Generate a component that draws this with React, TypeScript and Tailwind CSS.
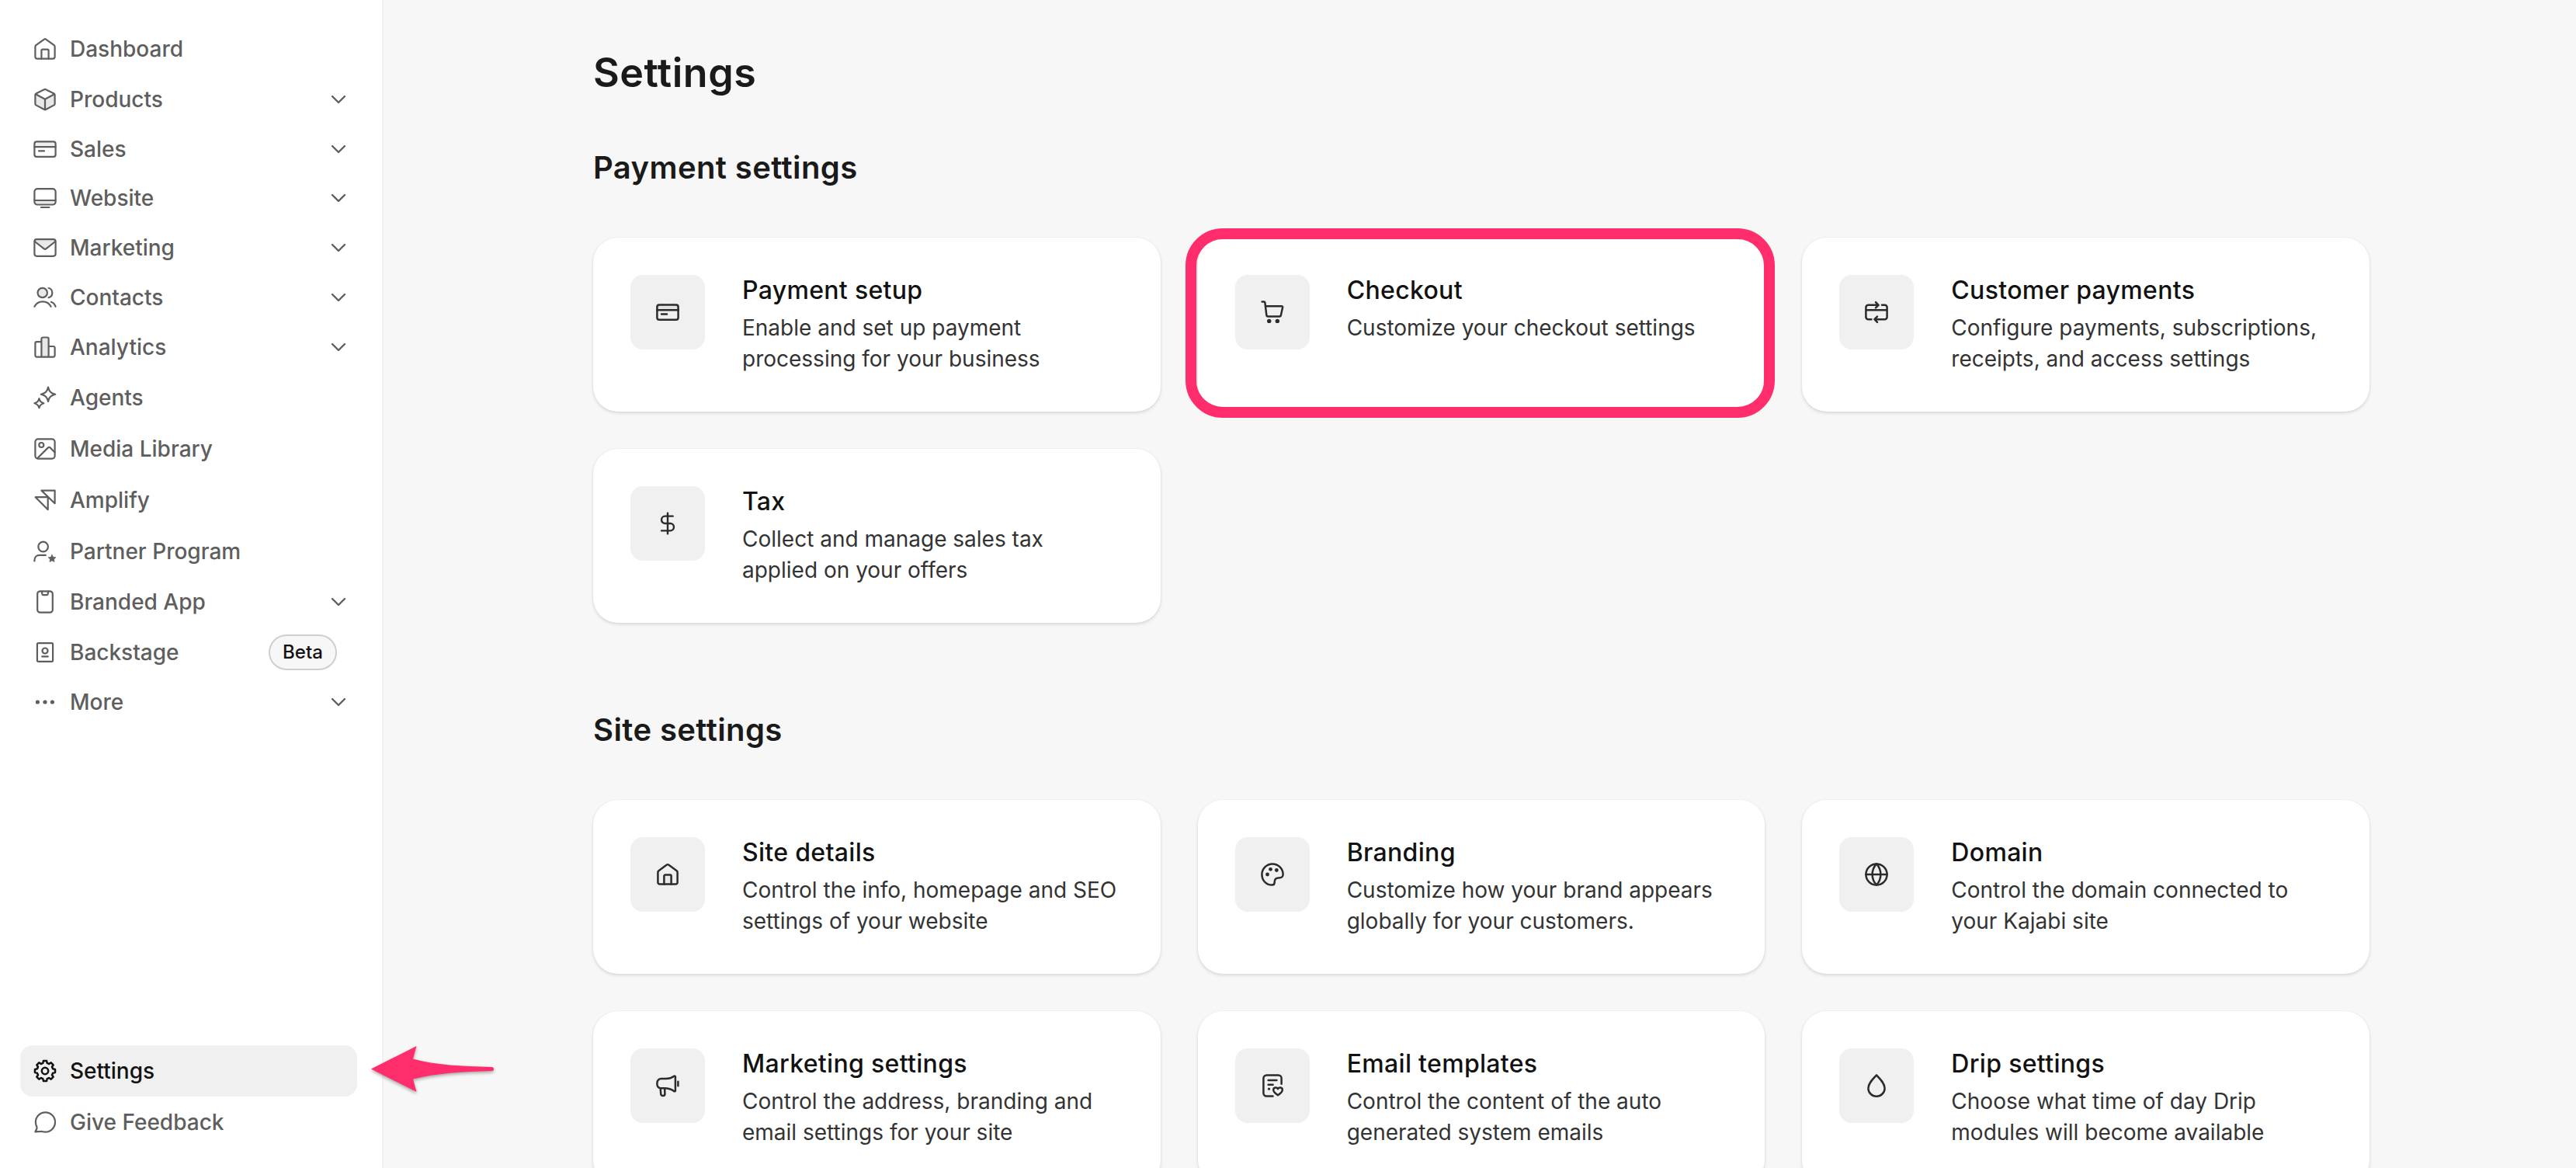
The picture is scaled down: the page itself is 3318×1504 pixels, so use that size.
import React from "react";
import { ChevronDown, DollarSign } from "lucide-react";
import { clsx } from "clsx";

type IconName =
  | "home"
  | "box"
  | "card"
  | "monitor"
  | "mail"
  | "contacts"
  | "bars"
  | "sparkles"
  | "image"
  | "amplify"
  | "partner"
  | "phone"
  | "backstage"
  | "more"
  | "gear"
  | "chat"
  | "cart"
  | "recurring"
  | "dollar"
  | "palette"
  | "globe"
  | "megaphone"
  | "template"
  | "drop";

interface NavItem {
  label: string;
  icon: IconName;
  expandable?: boolean;
  badge?: string;
  active?: boolean;
}

interface SettingsCard {
  title: string;
  icon: IconName;
  lines: string[];
  highlighted?: boolean;
}

// Eight rounded teeth around a 32x32 box
const gearPath = (() => {
  const points: string[] = [];
  for (let i = 0; i < 8; i++) {
    const base = (i * Math.PI) / 4 - Math.PI / 2;
    const steps: [number, number][] = [
      [-0.26, 10.4],
      [-0.16, 13.2],
      [0.16, 13.2],
      [0.26, 10.4],
    ];
    steps.forEach(([offset, radius]) => {
      const x = 16 + Math.cos(base + offset) * radius;
      const y = 16 + Math.sin(base + offset) * radius;
      points.push(`${x.toFixed(2)} ${y.toFixed(2)}`);
    });
  }
  return `M${points.join("L")}Z`;
})();

const tint = { fill: "#e8e8e8", stroke: "none" };
const solid = { fill: "currentColor", stroke: "none" };

const glyphs: Record<IconName, React.ReactNode> = {
  home: (
    <>
      <path d="M11.4 28.6V18a1.4 1.4 0 0 1 1.4-1.4h6.4a1.4 1.4 0 0 1 1.4 1.4v10.6" fill="#8881" />
      <path d="M3.4 13.2c0-.8.4-1.5 1-2L14.9 3.6a1.9 1.9 0 0 1 2.2 0l10.5 7.6c.6.5 1 1.2 1 2v13a2.4 2.4 0 0 1-2.4 2.4H5.8a2.4 2.4 0 0 1-2.4-2.4z" />
    </>
  ),
  box: (
    <>
      <path d="M3.4 9.2 16 15.8l12.6-6.6v13.6L16 29.4 3.4 22.8z" {...tint} />
      <path d="M15 3.2a2 2 0 0 1 2 0l10.6 5.4a1.9 1.9 0 0 1 1 1.7v11.4a1.9 1.9 0 0 1-1 1.7L17 29a2 2 0 0 1-2 0L4.4 23.4a1.9 1.9 0 0 1-1-1.7V10.3a1.9 1.9 0 0 1 1-1.7z" />
      <path d="M4 9.3 16 15.8l12-6.5M16 15.8v13" />
    </>
  ),
  card: (
    <>
      <path d="M3 7h26v6H3z" fill="#8882" stroke="none" />
      <rect x="2.4" y="6.4" width="27.2" height="19.4" rx="2.8" />
      <path d="M2.4 13.2h27.2M8 18.4h7" />
    </>
  ),
  monitor: (
    <>
      <path d="M3 19h26v4H3z" {...tint} />
      <rect x="2.4" y="4.2" width="27.2" height="20.3" rx="3.8" />
      <path d="M2.4 19h27.2M11 28h10.4" />
    </>
  ),
  mail: (
    <>
      <path d="M3 7.5 16 18 29 7.5 27 5.5H5z" {...tint} />
      <rect x="2.4" y="5.2" width="27.2" height="21.6" rx="3" />
      <path d="m2.8 8 11.6 9.2a2.6 2.6 0 0 0 3.2 0L29.2 8" />
    </>
  ),
  contacts: (
    <>
      <circle cx="12.7" cy="10" r="6.2" fill="#e8e8e8" />
      <path d="M20.6 4c2.8.4 4.7 3 4.7 6s-1.9 5.6-4.7 6.2" />
      <path d="M2.4 27.8c2-4 6-6.5 10.6-6.5s8.6 2.5 10.6 6.5M23.8 21.8c2.6.8 4.6 2.9 5.8 6" />
    </>
  ),
  bars: (
    <>
      <path d="M11.4 4.5h9.2v24h-9.2z" {...tint} />
      <path d="M11.4 28.6V5.2a1.7 1.7 0 0 1 1.7-1.7h5.8a1.7 1.7 0 0 1 1.7 1.7v23.4M11.4 9.2H5.2a1.8 1.8 0 0 0-1.8 1.8v15.8a1.8 1.8 0 0 0 1.8 1.8h21.6a1.8 1.8 0 0 0 1.8-1.8v-10a1.8 1.8 0 0 0-1.8-1.8h-6.2" />
    </>
  ),
  sparkles: (
    <>
      <path d="M20 2.6c1.3 5.6 3.5 7.8 9.2 9.2-5.7 1.4-7.9 3.6-9.2 9.2-1.3-5.6-3.5-7.8-9.2-9.2 5.7-1.4 7.9-3.6 9.2-9.2z" />
      <path d="M8.4 17.2c.9 3.6 2.4 5.1 6 6-3.6.9-5.1 2.4-6 6-.9-3.6-2.4-5.1-6-6 3.6-.9 5.1-2.4 6-6z" />
    </>
  ),
  image: (
    <>
      <rect x="3.4" y="3.4" width="25.2" height="25.2" rx="3.6" />
      <circle cx="11.3" cy="11" r="3" />
      <path d="M6 28.2 20 14.4a2 2 0 0 1 2.7 0l5.9 6" />
    </>
  ),
  amplify: <path d="M11.4 3.6h17.2v16.6L11.4 3.6zM3.7 12.2h16v16L3.7 12.2z" />,
  partner: (
    <>
      <circle cx="13.6" cy="10" r="6.3" />
      <path d="M2.4 28.4v-1c0-3.6 2.4-6.5 6.8-6.5h7.6" />
      <path
        d="m25 20.4 1.5 3 3.3.4-2.4 2.3.6 3.3-3-1.6-3 1.6.6-3.3-2.4-2.3 3.3-.4z"
        fill="currentColor"
        strokeWidth="0.8"
      />
    </>
  ),
  phone: (
    <>
      <rect x="6.2" y="2.4" width="19.6" height="27.2" rx="3.4" />
      <path d="M11.8 2.6 12.4 6a1.5 1.5 0 0 0 1.4 1.2h4.4A1.5 1.5 0 0 0 19.6 6l.6-3.4" />
    </>
  ),
  backstage: (
    <>
      <rect x="5.9" y="4.2" width="20.2" height="23.6" rx="1.6" />
      <circle cx="16" cy="14" r="3.5" />
      <path d="M12.2 21.4h7.6" />
    </>
  ),
  more: (
    <g {...solid}>
      <circle cx="6.4" cy="16" r="2.6" />
      <circle cx="16" cy="16" r="2.6" />
      <circle cx="25.4" cy="16" r="2.6" />
    </g>
  ),
  gear: (
    <>
      <path d={gearPath} />
      <circle cx="16" cy="16" r="4.2" />
    </>
  ),
  chat: (
    <path d="M16.4 3.4a12.5 12.5 0 0 0-12.5 12.5c0 2.5.7 4.6 1.5 6.4.3.8.2 1.4-.1 2.2l-1.9 3.9 7.2-.5c1-.1 1.6.1 2.5.3 1 .2 2.1.4 3.3.4a12.6 12.6 0 0 0 0-25.2z" />
  ),
  cart: (
    <>
      <path d="M2.6 2.6h2.3a1.5 1.5 0 0 1 1.5 1.3l1.9 15.7a2 2 0 0 0 2 1.8h14.6a2 2 0 0 0 2-1.7L29.1 9.8a1.4 1.4 0 0 0-1.4-1.6H7" />
      <circle cx="11.7" cy="27.4" r="2.7" {...solid} />
      <circle cx="22.3" cy="27.4" r="2.7" {...solid} />
    </>
  ),
  recurring: (
    <path d="M18.5 6.8H5.4a3 3 0 0 0-3 3v12.4a3 3 0 0 0 3 3h4M15 3.2l3.6 3.6-3.6 3.6M23 6.8h3.6a3 3 0 0 1 3 3v12.4a3 3 0 0 1-3 3H13.5M17 21.6l-3.6 3.6 3.6 3.6M2.4 13.3h27.2" />
  ),
  dollar: null,
  palette: (
    <>
      <path d="M16 2.4C8.5 2.4 2.4 8.4 2.4 16c0 7.2 5 13.6 13 13.6 2.6 0 3.3-1.4 3.3-3.6 0-3.5 1.5-5.6 4.8-5.6 4.5 0 6.1-1 6.1-4.4C29.6 8.4 23.5 2.4 16 2.4z" />
      <circle cx="9.5" cy="16" r="2.4" {...solid} />
      <circle cx="13.5" cy="9.3" r="2.4" {...solid} />
      <circle cx="21.3" cy="10.5" r="2.4" {...solid} />
    </>
  ),
  globe: (
    <>
      <circle cx="16" cy="16" r="13.6" />
      <path d="M2.4 16h27.2M16 2.4c-7.2 8-7.2 19.2 0 27.2M16 2.4c7.2 8 7.2 19.2 0 27.2" />
    </>
  ),
  megaphone: (
    <path d="M24.2 3.8c-3 2.2-6.5 3.3-10.2 3.3H7.8a5.3 5.3 0 0 0-5.4 5.6v1.4a5.2 5.2 0 0 0 4.3 5.2l.5 7.2a2.6 2.6 0 0 0 5.2 0l-.3-7.2c4.4 0 8.6 1.3 12.3 3.9.7.4 1.5 0 1.5-.8V4.5c0-.8-1-1.2-1.7-.7zM6.7 19.3h5.4M29.4 10.8v5.4" />
  ),
  template: (
    <>
      <path d="M16.5 29.5H8.4a4 4 0 0 1-4-4v-19a4 4 0 0 1 4-4h15.2a4 4 0 0 1 4 4v7.2M10.6 9h10.8M10.6 14.7h6" />
      <circle cx="11.5" cy="20.2" r="1.6" {...solid} />
      <path d="M23 28.2c-3.6-2.4-5.8-4.5-5.8-6.8 0-3.3 4.3-4 5.8-1.2 1.5-2.8 5.8-2.1 5.8 1.2 0 2.3-2.2 4.4-5.8 6.8z" />
    </>
  ),
  drop: (
    <path d="M16 2.4c5 5.2 10.6 10.6 10.6 17A10.5 10.5 0 0 1 16 29.7 10.5 10.5 0 0 1 5.4 19.4c0-6.4 5.6-11.8 10.6-17z" />
  ),
};

function Icon({ name, strokeWidth = 2 }: { name: IconName; strokeWidth?: number }) {
  if (name === "dollar") {
    return <DollarSign className="size-8 shrink-0" strokeWidth={1.8} />;
  }
  return (
    <svg
      viewBox="0 0 32 32"
      className="size-8 shrink-0"
      fill="none"
      stroke="currentColor"
      strokeWidth={strokeWidth}
      strokeLinecap="round"
      strokeLinejoin="round"
    >
      {glyphs[name]}
    </svg>
  );
}

const mainNav: NavItem[] = [
  { label: "Dashboard", icon: "home" },
  { label: "Products", icon: "box", expandable: true },
  { label: "Sales", icon: "card", expandable: true },
  { label: "Website", icon: "monitor", expandable: true },
  { label: "Marketing", icon: "mail", expandable: true },
  { label: "Contacts", icon: "contacts", expandable: true },
  { label: "Analytics", icon: "bars", expandable: true },
  { label: "Agents", icon: "sparkles" },
  { label: "Media Library", icon: "image" },
  { label: "Amplify", icon: "amplify" },
  { label: "Partner Program", icon: "partner" },
  { label: "Branded App", icon: "phone", expandable: true },
  { label: "Backstage", icon: "backstage", badge: "Beta" },
  { label: "More", icon: "more", expandable: true },
];

const footerNav: NavItem[] = [
  { label: "Settings", icon: "gear", active: true },
  { label: "Give Feedback", icon: "chat" },
];

const paymentCards: SettingsCard[] = [
  { title: "Payment setup", icon: "card", lines: ["Enable and set up payment", "processing for your business"] },
  { title: "Checkout", icon: "cart", lines: ["Customize your checkout settings"], highlighted: true },
  { title: "Customer payments", icon: "recurring", lines: ["Configure payments, subscriptions,", "receipts, and access settings"] },
  { title: "Tax", icon: "dollar", lines: ["Collect and manage sales tax", "applied on your offers"] },
];

const siteCards: SettingsCard[] = [
  { title: "Site details", icon: "home", lines: ["Control the info, homepage and SEO", "settings of your website"] },
  { title: "Branding", icon: "palette", lines: ["Customize how your brand appears", "globally for your customers."] },
  { title: "Domain", icon: "globe", lines: ["Control the domain connected to", "your Kajabi site"] },
  { title: "Marketing settings", icon: "megaphone", lines: ["Control the address, branding and", "email settings for your site"] },
  { title: "Email templates", icon: "template", lines: ["Control the content of the auto", "generated system emails"] },
  { title: "Drip settings", icon: "drop", lines: ["Choose what time of day Drip", "modules will become available"] },
];

function NavLink({ item }: { item: NavItem }) {
  return (
    <a
      className={clsx(
        "flex items-center gap-4 rounded-2xl px-4 text-[28px] font-[450]",
        item.expandable ? "h-[63.8px]" : "h-[66px]",
        item.active ? "bg-[#f0f0f0] text-[#121212]" : "text-[#5e5e5e]"
      )}
    >
      <Icon name={item.icon} strokeWidth={item.active ? 2.5 : 2.2} />
      <span className="flex-1 whitespace-nowrap">{item.label}</span>
      {item.badge && (
        <span className="mr-2.5 flex h-[46px] w-[88px] items-center justify-center rounded-full border-2 border-[#cfcfcf] bg-[#f7f7f7] text-2xl font-[450] text-[#121212]">
          {item.badge}
        </span>
      )}
      {item.expandable && <ChevronDown className="mr-[-8px] size-8" strokeWidth={1.8} />}
    </a>
  );
}

function Card({ card }: { card: SettingsCard }) {
  return (
    <div className="relative flex h-56 gap-12 rounded-[32px] bg-white p-12 shadow-[0_2px_4px_rgba(0,0,0,0.13),0_0_2px_rgba(0,0,0,0.05)]">
      <div className="flex size-24 shrink-0 items-center justify-center rounded-2xl bg-[#f0f0f0] text-[#2b2b2b]">
        <Icon name={card.icon} strokeWidth={2.5} />
      </div>
      <div className="whitespace-nowrap">
        <h3 className="text-[32px] font-medium leading-[40px] tracking-[0.01em] text-[#121212]">{card.title}</h3>
        <p className="mt-2 text-[28px] leading-[40px] text-[#333333]">
          {card.lines.map((line) => (
            <span key={line} className="block">
              {line}
            </span>
          ))}
        </p>
      </div>
      {card.highlighted && (
        <div className="absolute -top-3 -right-[13px] -bottom-2 -left-4 rounded-[48px] border-[14px] border-[#ff2d6c]" />
      )}
    </div>
  );
}

function Section({ title, cards }: { title: string; cards: SettingsCard[] }) {
  return (
    <section>
      <h2 className="text-[40px] font-semibold leading-[48px] tracking-[0.01em] text-[#1a1a1a]">{title}</h2>
      <div className="mt-[66px] grid grid-cols-3 gap-12">
        {cards.map((card) => (
          <Card key={card.title} card={card} />
        ))}
      </div>
    </section>
  );
}

export default function App() {
  return (
    <div className="relative flex h-[1504px] w-[3318px] overflow-hidden bg-[#f7f7f7] font-['Inter',sans-serif]">
      <aside className="flex w-[494px] shrink-0 flex-col justify-between border-r-2 border-[#f0f0f0] bg-white pt-[30px] pr-8 pb-[26px] pl-[26px]">
        <nav>
          {mainNav.map((item) => (
            <NavLink key={item.label} item={item} />
          ))}
        </nav>
        <nav>
          {footerNav.map((item) => (
            <NavLink key={item.label} item={item} />
          ))}
        </nav>
      </aside>

      <main className="ml-[270px] w-[2288px] shrink-0 pt-[62px]">
        <h1 className="text-[52px] font-semibold leading-[64px] tracking-[0.01em] text-[#1a1a1a]">Settings</h1>
        <div className="mt-[66px] flex flex-col gap-[114px]">
          <Section title="Payment settings" cards={paymentCards} />
          <Section title="Site settings" cards={siteCards} />
        </div>
      </main>

      {/* Arrow pointing at the active nav item */}
      <svg
        viewBox="0 0 170 72"
        className="absolute top-[1340px] left-[474px] h-[72px] w-[170px] drop-shadow-[0_2px_2px_rgba(0,0,0,0.35)]"
      >
        <path
          d="M4 36.5 62.5 7 58 23.5c30 8 62 9.5 102 10.5q2 0 2 2.5t-2 2.5c-40 1-72 3-102 10.5L62.5 66z"
          fill="#ff2d6c"
        />
      </svg>
    </div>
  );
}
